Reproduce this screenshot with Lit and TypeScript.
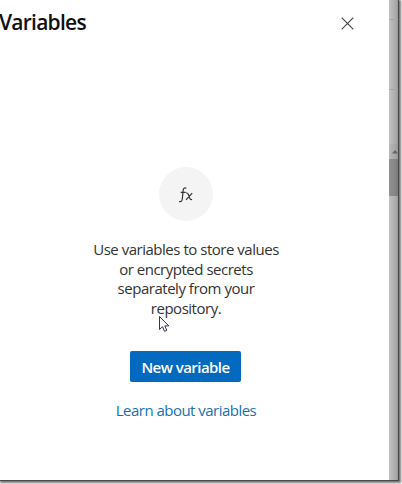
import { LitElement, html, css } from "lit";
import { customElement } from "lit/decorators.js";

@customElement("app-root")
export class AppRoot extends LitElement {
  static styles = css`
    :host {
      display: block;
      width: 402px;
      height: 484px;
      overflow: hidden;
      background: #fff;
      font-family: "Open Sans", "Noto Sans", sans-serif;
      color: #333;
    }
    .window {
      box-sizing: border-box;
      display: flex;
      width: 399px;
      height: 481px;
      border-right: 1px solid #484848;
      border-bottom: 1px solid #484848;
      box-shadow: 1px 1px 2px 1px rgba(0, 0, 0, 0.55);
    }
    .panel {
      flex: 1;
      display: flex;
      flex-direction: column;
      background: #fff;
    }
    header {
      display: flex;
      justify-content: space-between;
      height: 48px;
      padding-right: 35px;
    }
    h2 {
      margin: 7px 0 0 -1px;
      font-size: 21px;
      line-height: 30px;
      font-weight: 600;
      letter-spacing: -0.75px;
      color: #111;
    }
    .close {
      width: 13px;
      height: 13px;
      margin-top: 17px;
    }
    .empty {
      display: flex;
      flex-direction: column;
      align-items: center;
      margin-top: 119px;
      padding-right: 18px;
    }
    .badge {
      display: flex;
      align-items: center;
      justify-content: center;
      width: 54px;
      height: 54px;
      border-radius: 50%;
      background: #f4f4f4;
    }
    .badge svg {
      margin-top: 2px;
    }
    p {
      margin: 19px 0 0 1px;
      font-size: 15px;
      line-height: 19.6px;
      letter-spacing: -0.48px;
      text-align: center;
      white-space: nowrap;
    }
    button {
      width: 111px;
      height: 31px;
      margin: 32.6px 0 0;
      padding: 1px 0 0;
      border: 0;
      border-radius: 2px;
      background: #036ac0;
      color: #fff;
      font: 600 15px/30px "Open Sans", sans-serif;
      letter-spacing: -0.55px;
      white-space: nowrap;
    }
    a {
      margin: 17px 0 0 1px;
      font-size: 15px;
      line-height: 22px;
      letter-spacing: -0.52px;
      color: #2071ae;
      white-space: nowrap;
    }
    .gutter {
      width: 9px;
      display: flex;
      flex-direction: column;
      background: linear-gradient(90deg, #c2c2c2, #aaa 75%, #999);
    }
    .upper {
      height: 144px;
      box-sizing: border-box;
      padding-top: 19px;
    }
    .rule {
      height: 1px;
      margin-bottom: 69px;
      background: #a6a6a6;
    }
    .arrow {
      height: 15px;
      background: rgba(120, 120, 120, 0.12);
    }
    .arrow svg {
      display: block;
    }
    .thumb {
      height: 37px;
      background: linear-gradient(90deg, #929292, #838383 75%, #787878);
    }
    .pointer {
      position: absolute;
      left: 158px;
      top: 315px;
    }
  `;

  render() {
    return html`
      <div class="window">
        <section class="panel">
          <header>
            <h2>Variables</h2>
            <svg class="close" viewBox="0 0 13 13" fill="none" stroke="#444" stroke-width="1.15">
              <path d="M.7.7l11.6 11.6M12.3.7L.7 12.3" />
            </svg>
          </header>
          <div class="empty">
            <div class="badge">
              <svg width="16" height="16" viewBox="0 0 16 16" fill="none" stroke="#333" stroke-width="1.2">
                <path d="M8.4 1.2C6.3.4 5.4 1.3 5.2 3.1L4.3 12c-.2 2.2-1.3 3-3.2 2.4M2.7 5.4h5M8.1 6.1c1.3-.4 1.8.2 2.3 1.4l1.3 3.6c.5 1.4 1.1 1.8 2.4 1.4M14.2 6.1L8 12.8" />
              </svg>
            </div>
            <p>Use variables to store values<br />or encrypted secrets<br />separately from your<br />repository.</p>
            <button>New variable</button>
            <a>Learn about variables</a>
          </div>
        </section>
        <aside class="gutter">
          <div class="upper"><div class="rule"></div><div class="rule"></div></div>
          <div class="arrow">
            <svg width="9" height="15" viewBox="0 0 9 15"><path d="M3 9.5L6 6l3 3.5z" fill="#666" /></svg>
          </div>
          <div class="thumb"></div>
        </aside>
      </div>
      <svg class="pointer" width="12" height="18" viewBox="0 0 12 18">
        <path d="M1.5 1.5v13l3-2.8 2 4.6 2.3-1-2-4.4h4z" fill="#fff" stroke="#34344a" stroke-width="1" />
      </svg>
    `;
  }
}
